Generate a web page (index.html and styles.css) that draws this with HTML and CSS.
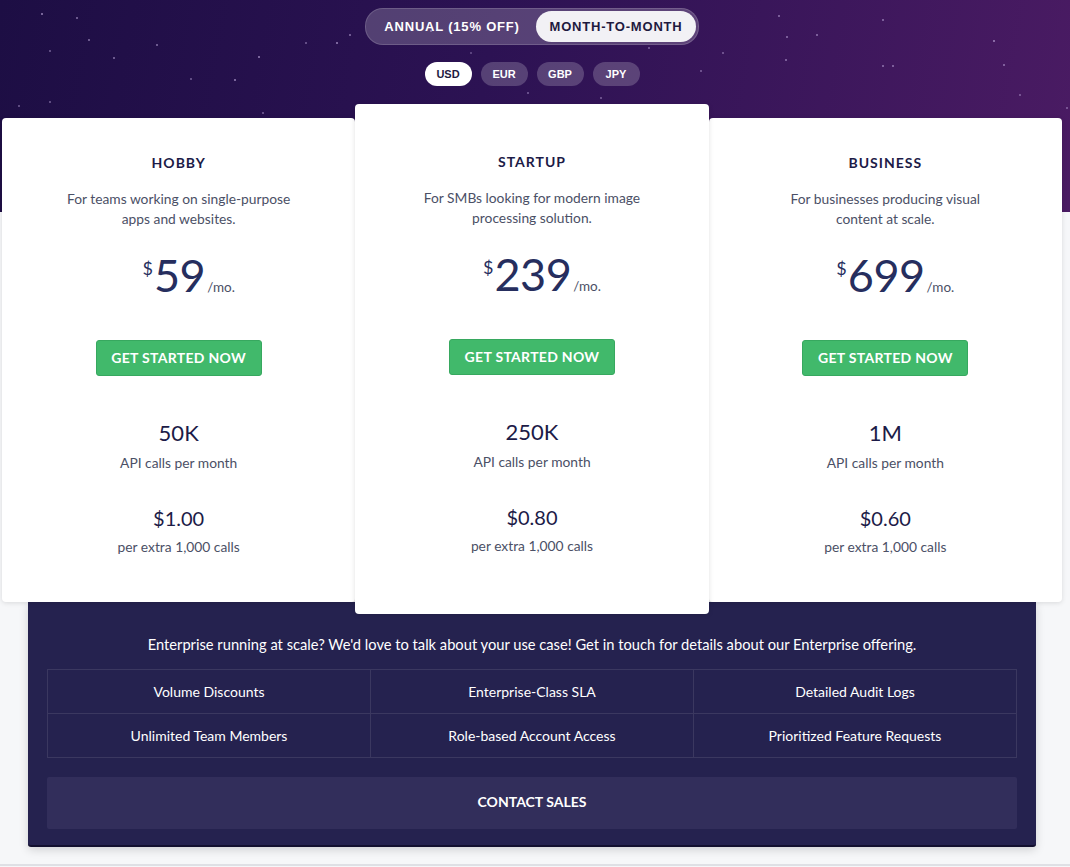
FILE: index.html
```html
<!DOCTYPE html>
<html lang="en">
<head>
  <meta charset="UTF-8">
  <meta name="viewport" content="width=device-width, initial-scale=1.0">
  <title>Pricing</title>
  <link rel="stylesheet" href="styles.css">
</head>
<body>
  <div class="hero">
    <div class="billing">
      <button class="billing-opt">Annual (15% off)</button>
      <button class="billing-opt active">Month-to-month</button>
    </div>
    <div class="currencies">
      <button class="cur active">USD</button>
      <button class="cur">EUR</button>
      <button class="cur">GBP</button>
      <button class="cur">JPY</button>
    </div>
  </div>

  <div class="container">
    <div class="plans">
      <div class="plan">
        <h3>Hobby</h3>
        <p class="desc">For teams working on single-purpose apps and websites.</p>
        <div class="price"><span class="cur-sign">$</span><span class="amount">59</span><span class="per">/mo.</span></div>
        <a class="cta" href="#">Get started now</a>
        <div class="stat">50K</div>
        <div class="stat-label">API calls per month</div>
        <div class="stat small">$1.00</div>
        <div class="stat-label">per extra 1,000 calls</div>
      </div>
      <div class="plan featured">
        <h3>Startup</h3>
        <p class="desc">For SMBs looking for modern image processing solution.</p>
        <div class="price"><span class="cur-sign">$</span><span class="amount">239</span><span class="per">/mo.</span></div>
        <a class="cta" href="#">Get started now</a>
        <div class="stat">250K</div>
        <div class="stat-label">API calls per month</div>
        <div class="stat small">$0.80</div>
        <div class="stat-label">per extra 1,000 calls</div>
      </div>
      <div class="plan">
        <h3>Business</h3>
        <p class="desc">For businesses producing visual content at scale.</p>
        <div class="price"><span class="cur-sign">$</span><span class="amount">699</span><span class="per">/mo.</span></div>
        <a class="cta" href="#">Get started now</a>
        <div class="stat">1M</div>
        <div class="stat-label">API calls per month</div>
        <div class="stat small">$0.60</div>
        <div class="stat-label">per extra 1,000 calls</div>
      </div>
    </div>

    <div class="enterprise">
      <p class="ent-text">Enterprise running at scale? We'd love to talk about your use case! Get in touch for details about our Enterprise offering.</p>
      <div class="features">
        <div>Volume Discounts</div>
        <div>Enterprise-Class SLA</div>
        <div>Detailed Audit Logs</div>
        <div>Unlimited Team Members</div>
        <div>Role-based Account Access</div>
        <div>Prioritized Feature Requests</div>
      </div>
      <a class="contact" href="#">Contact sales</a>
    </div>
  </div>
  <div class="divider"></div>
</body>
</html>
```

FILE: styles.css
```css
body {
  margin: 0;
  background-color: #f6f7f9;
  font-family: Lato, "Noto Sans", sans-serif;
  color: #1c1b47;
}
.hero {
  position: relative;
  height: 212px;
  box-sizing: border-box;
  padding-top: 8px;
  background: linear-gradient(100deg, #1d0e44 0%, #2c1253 45%, #4a1b63 100%);
  overflow: hidden;
}
.hero::before {
  content: "";
  position: absolute;
  left: 0;
  top: 0;
  width: 2px;
  height: 2px;
  border-radius: 50%;
  background: transparent;
  box-shadow:
    41px 13px rgba(200,180,230,.7), 76px 17px rgba(200,180,230,.6), 88px 39px rgba(200,180,230,.6),
    49px 50px rgba(200,180,230,.5), 113px 57px rgba(200,180,230,.6), 156px 44px rgba(200,180,230,.6),
    258px 56px rgba(200,180,230,.7), 234px 79px rgba(200,180,230,.7), 305px 42px rgba(200,180,230,.5),
    336px 42px rgba(200,180,230,.7), 349px 34px rgba(200,180,230,.6), 49px 101px rgba(200,180,230,.5),
    18px 105px rgba(200,180,230,.5), 262px 112px rgba(200,180,230,.5), 778px 15px rgba(200,180,230,.6),
    786px 36px rgba(200,180,230,.6), 816px 34px rgba(200,180,230,.6), 722px 52px rgba(200,180,230,.5),
    785px 59px rgba(200,180,230,.6), 882px 19px rgba(200,180,230,.6), 882px 65px rgba(200,180,230,.6),
    892px 65px rgba(200,180,230,.6), 993px 40px rgba(200,180,230,.7), 1003px 64px rgba(200,180,230,.6),
    1019px 94px rgba(200,180,230,.5), 1066px 107px rgba(200,180,230,.5), 648px 47px rgba(200,180,230,.5),
    700px 70px rgba(200,180,230,.5), 527px 92px rgba(200,180,230,.5), 600px 97px rgba(200,180,230,.5),
    430px 30px rgba(200,180,230,.5), 470px 52px rgba(200,180,230,.4), 190px 78px rgba(200,180,230,.5),
    960px 130px rgba(200,180,230,.5), 900px 180px rgba(200,180,230,.4), 1040px 160px rgba(200,180,230,.5);
}
.billing {
  display: flex;
  width: 328px;
  margin: 0 auto;
  padding: 2px;
  border: 1px solid rgba(255, 255, 255, 0.15);
  border-radius: 18px;
  background-color: rgba(255, 255, 255, 0.2);
  transform: translateX(-3px);
}
.billing-opt, .cur {
  border: none;
  background: none;
  cursor: pointer;
  font-family: "Liberation Sans", Arial, sans-serif;
  font-weight: bold;
  text-transform: uppercase;
  color: #fff;
}
.billing-opt {
  height: 31px;
  padding: 0;
  font-size: 13px;
  letter-spacing: 0.8px;
  border-radius: 16px;
}
.billing-opt:first-child {
  width: 168px;
}
.billing-opt.active {
  width: 160px;
  background-color: #f2f1f5;
  color: #1e1a3f;
}
.currencies {
  display: flex;
  justify-content: center;
  gap: 9px;
  margin-top: 17px;
  transform: translateX(-3px);
}
.cur {
  width: 47px;
  height: 24px;
  padding: 0;
  border-radius: 12px;
  font-size: 11px;
  background-color: rgba(255, 255, 255, 0.2);
}
.cur.active {
  background-color: #fff;
  color: #1e1a3f;
}
.container {
  width: 1060px;
  margin: -108px 0 0 2px;
}
.plans {
  display: flex;
  align-items: flex-start;
}
.plan {
  position: relative;
  z-index: 2;
  flex: 1;
  margin-top: 14px;
  padding: 36px 20px 45px;
  background-color: #fff;
  border-radius: 4px;
  box-shadow: 0 1px 5px rgba(0, 0, 0, 0.12);
  text-align: center;
}
.plan.featured {
  z-index: 3;
  margin-top: 0;
  padding: 49px 20px 58px;
}
.plan h3 {
  margin: 0;
  font-size: 14px;
  line-height: 17px;
  letter-spacing: 1px;
  font-weight: bold;
  text-transform: uppercase;
  color: #1c1b47;
}
.desc {
  max-width: 230px;
  margin: 18px auto 0;
  font-size: 13.8px;
  line-height: 20px;
  color: #4b5066;
}
.price {
  margin-top: 22px;
  padding-left: 20px;
  height: 50px;
  display: flex;
  justify-content: center;
  align-items: baseline;
  color: #262e5e;
}
.cur-sign {
  align-self: flex-start;
  margin-top: 6px;
  margin-right: 1px;
  font-size: 18px;
}
.amount {
  font-size: 45px;
  line-height: 48px;
  letter-spacing: -0.5px;
}
.per {
  margin-left: 2px;
  font-size: 13.5px;
  color: #4b5066;
}
.cta {
  display: inline-block;
  margin-top: 39px;
  width: 166px;
  height: 36px;
  box-sizing: border-box;
  line-height: 34px;
  background-color: #41b96b;
  border: 1px solid #37a85f;
  border-radius: 3px;
  color: #fff;
  font-size: 14px;
  font-weight: bold;
  letter-spacing: 0.3px;
  text-transform: uppercase;
  text-decoration: none;
}
.stat {
  margin-top: 44px;
  font-size: 22px;
  line-height: 26px;
  color: #1c1b47;
}
.stat.small {
  margin-top: 32px;
  font-size: 20px;
}
.stat-label {
  margin-top: 7px;
  font-size: 13.8px;
  line-height: 20px;
  color: #4b5066;
}
.stat.small + .stat-label {
  margin-top: 6px;
}
.enterprise {
  position: relative;
  z-index: 1;
  margin: -12px 26px 0;
  padding: 31px 19px 16px;
  background-color: #25224f;
  border-bottom: 2px solid #13102f;
  border-radius: 0 0 3px 3px;
  box-shadow: 0 3px 10px rgba(0, 0, 0, 0.15);
  color: #fff;
}
.ent-text {
  margin: 0;
  font-size: 14.7px;
  line-height: 22px;
  text-align: center;
}
.features {
  display: grid;
  grid-template-columns: repeat(3, 1fr);
  margin-top: 14px;
  border-top: 1px solid rgba(255, 255, 255, 0.1);
  border-left: 1px solid rgba(255, 255, 255, 0.1);
}
.features div {
  height: 44px;
  line-height: 43px;
  box-sizing: border-box;
  border-right: 1px solid rgba(255, 255, 255, 0.1);
  border-bottom: 1px solid rgba(255, 255, 255, 0.1);
  font-size: 14px;
  text-align: center;
}
.contact {
  display: block;
  margin-top: 19px;
  height: 52px;
  line-height: 50px;
  background-color: #322e5b;
  border-radius: 2px;
  color: #fff;
  font-size: 14px;
  font-weight: bold;
  text-align: center;
  text-transform: uppercase;
  text-decoration: none;
}
.divider {
  margin-top: 17px;
  border-top: 2px solid #dfe0e5;
}
```
